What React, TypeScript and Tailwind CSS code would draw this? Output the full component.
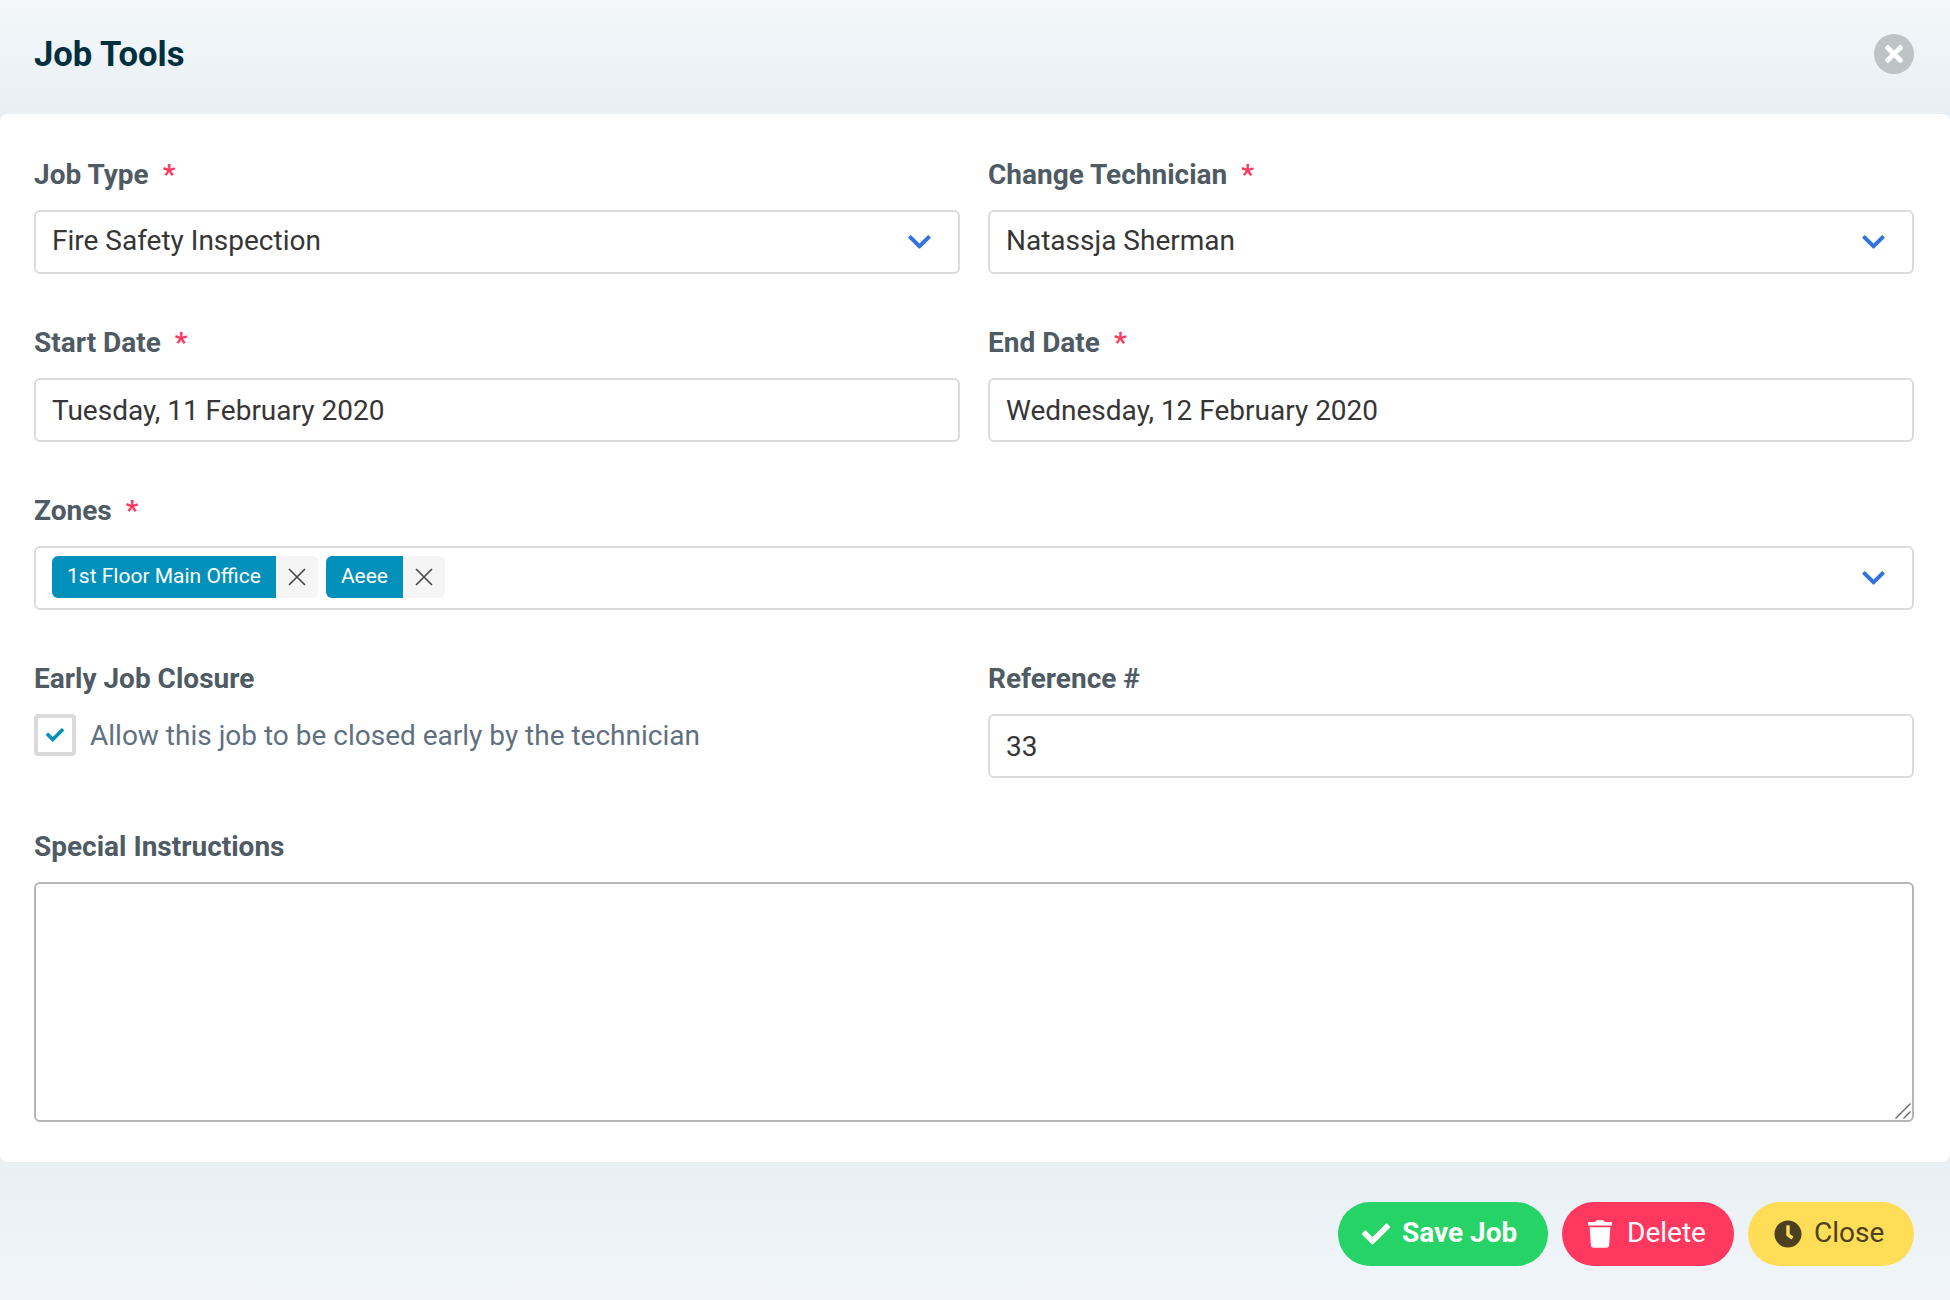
import { FaCheck, FaChevronDown, FaClock, FaTimes, FaTrash } from "react-icons/fa";

type FieldProps = {
  label: string;
  required?: boolean;
  children: React.ReactNode;
};

function Field({ label, required, children }: FieldProps) {
  return (
    <div className="min-w-0">
      <label className="mb-5 block h-8 pt-px text-[28px] leading-8 font-bold text-[#4f5b64]">
        {label}
        {required && <span className="ml-[14px] text-[#ff3860]">*</span>}
      </label>
      {children}
    </div>
  );
}

function Chevron() {
  return <FaChevronDown className="h-[26px] w-[23px] text-[#3273dc]" />;
}

function SelectBox({ value }: { value: string }) {
  return (
    <div className="flex h-16 items-center justify-between rounded-md border-2 border-[#dbdbdb] bg-white pr-[27px] pl-4 text-[28px] text-[#363636]">
      <span className="mb-[3px]">{value}</span>
      <Chevron />
    </div>
  );
}

function TextInput({ value }: { value: string }) {
  return (
    <input
      readOnly
      defaultValue={value}
      className="block h-16 w-full rounded-md border-2 border-[#dbdbdb] bg-white px-4 text-[28px] text-[#363636] outline-none"
    />
  );
}

function Tag({ label }: { label: string }) {
  return (
    <div className="flex h-[42px]">
      <span className="flex items-center rounded-l-md bg-[#0391bc] px-[15px] text-[21px] text-white">{label}</span>
      <span className="flex w-[42px] items-center justify-center rounded-r-md bg-[#f5f5f5]">
        <svg viewBox="0 0 18 18" className="h-[18px] w-[18px]" fill="none" stroke="#4a4a4a" strokeWidth="1.7">
          <path d="M1 1l16 16M17 1L1 17" />
        </svg>
      </span>
    </div>
  );
}

export default function App() {
  return (
    <div className="flex h-[1300px] w-[1950px] flex-col bg-[#e9f1f5] font-['Roboto',sans-serif]">
      <header className="flex h-[114px] shrink-0 items-center justify-between bg-gradient-to-b from-[#f3f7fa] to-[#e8f0f4] pr-9 pb-[6px] pl-[34px]">
        <h1 className="mt-[2px] text-[34.6px] font-bold text-[#00303f]">Job Tools</h1>
        <button className="flex h-10 w-10 items-center justify-center rounded-full bg-[#bec3c6] text-white">
          <FaTimes className="h-[26px] w-[18px]" />
        </button>
      </header>

      <main className="shrink-0 rounded-lg bg-white pt-11 pr-9 pb-10 pl-[34px]">
        <div className="grid grid-cols-2 gap-x-7 gap-y-[52px]">
          <Field label="Job Type" required>
            <SelectBox value="Fire Safety Inspection" />
          </Field>
          <Field label="Change Technician" required>
            <SelectBox value="Natassja Sherman" />
          </Field>
          <Field label="Start Date" required>
            <TextInput value="Tuesday, 11 February 2020" />
          </Field>
          <Field label="End Date" required>
            <TextInput value="Wednesday, 12 February 2020" />
          </Field>
          <div className="col-span-2">
            <Field label="Zones" required>
              <div className="flex h-16 items-center justify-between rounded-md border-2 border-[#dbdbdb] bg-white pr-[27px] pl-4">
                <div className="mb-[2px] flex gap-2">
                  <Tag label="1st Floor Main Office" />
                  <Tag label="Aeee" />
                </div>
                <Chevron />
              </div>
            </Field>
          </div>
          <Field label="Early Job Closure">
            <div className="flex items-start gap-[14px]">
              <span className="flex h-[42px] w-[42px] items-center justify-center rounded border-4 border-[#dbdbdb] bg-white text-[#0391bc]">
                <FaCheck className="h-[18px] w-[18px]" />
              </span>
              <span className="mt-[1px] text-[28px] leading-[42px] text-[#5f7180]">
                Allow this job to be closed early by the technician
              </span>
            </div>
          </Field>
          <Field label="Reference #">
            <TextInput value="33" />
          </Field>
          <div className="col-span-2">
            <Field label="Special Instructions">
              <div className="relative">
                <textarea
                  readOnly
                  className="block h-[240px] w-full resize-none rounded-md border-2 border-[#b5b5b5] bg-white outline-none"
                />
                {/* bigger than the browser's own resize grip */}
                <svg
                  viewBox="0 0 16 16"
                  className="pointer-events-none absolute right-[3px] bottom-[3px] h-4 w-4"
                  fill="none"
                  stroke="#666"
                  strokeWidth="1.4"
                >
                  <path d="M0.5 15.5L15.5 0.5M8.5 15.5L15.5 8.5" />
                </svg>
              </div>
            </Field>
          </div>
        </div>
      </main>

      <footer className="flex flex-1 items-start justify-end gap-[14px] bg-gradient-to-b from-[#e8f0f4] to-[#f1f5f9] pt-10 pr-9">
        <button className="flex h-16 w-[210px] items-center gap-3 rounded-full bg-[#26d366] pl-6 text-[28px] font-bold text-white">
          <FaCheck className="h-7 w-7" />
          <span className="mb-[3px]">Save Job</span>
        </button>
        <button className="flex h-16 w-[172px] items-center gap-[15px] rounded-full bg-[#ff3860] pl-[26px] text-[28px] text-white">
          <FaTrash className="h-7 w-[24px]" />
          <span className="mb-[3px]">Delete</span>
        </button>
        <button className="flex h-16 w-[166px] items-center gap-3 rounded-full bg-[#ffdd57] pl-[26px] text-[28px] text-[#4d4020]">
          <FaClock className="h-7 w-7" />
          <span className="mb-[3px]">Close</span>
        </button>
      </footer>
    </div>
  );
}
